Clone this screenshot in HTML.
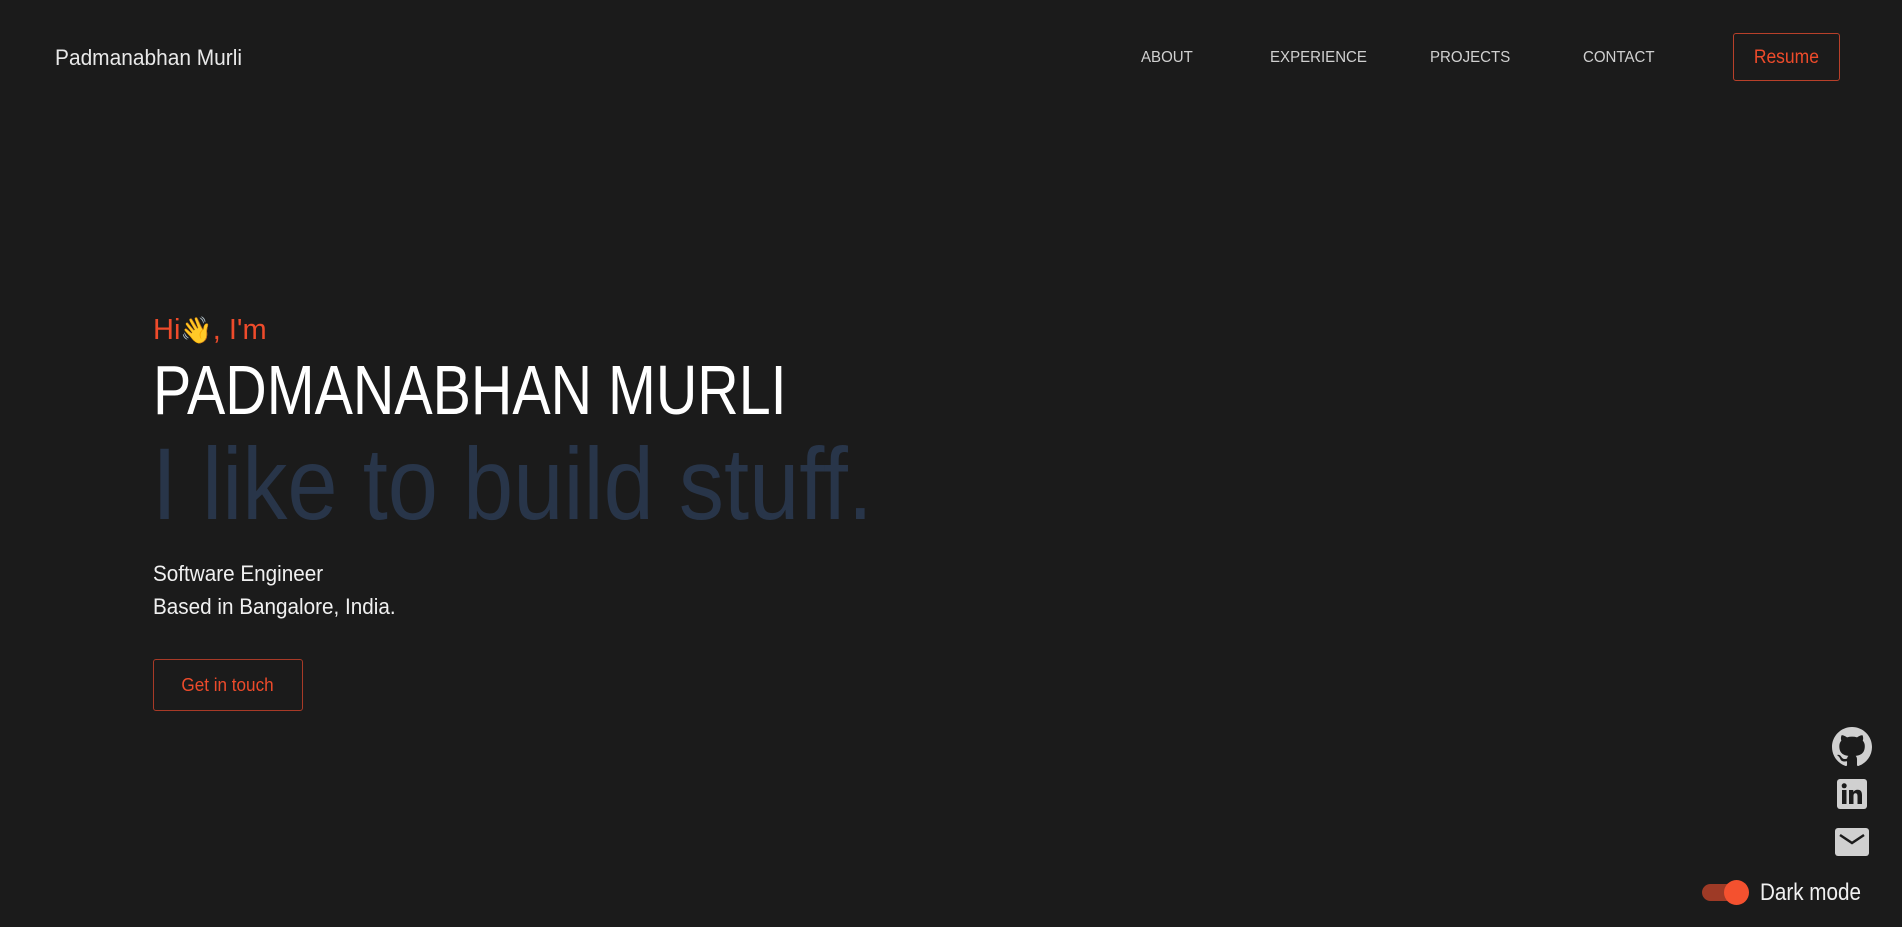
<!DOCTYPE html>
<html><head><meta charset="utf-8"><style>
html,body{margin:0;padding:0;background:#1b1b1b;width:1902px;height:927px;overflow:hidden;font-family:"Liberation Sans",sans-serif;color:#fff}
.a{position:absolute;white-space:nowrap}
.sx{display:inline-block;transform-origin:left center}
.nav{font-size:16px;color:#d0d0d0;top:49px}
.red{color:#ee4b2b}
</style></head><body>
<div class="a" style="left:55px;top:45px;font-size:22px;color:#e8e8e8"><span class="sx" style="transform:scaleX(.95)">Padmanabhan Murli</span></div>
<div class="a nav" style="left:1141px"><span class="sx" style="transform:scaleX(.94)">ABOUT</span></div>
<div class="a nav" style="left:1270px"><span class="sx" style="transform:scaleX(.94)">EXPERIENCE</span></div>
<div class="a nav" style="left:1430px"><span class="sx" style="transform:scaleX(.94)">PROJECTS</span></div>
<div class="a nav" style="left:1583px"><span class="sx" style="transform:scaleX(.94)">CONTACT</span></div>
<div class="a" style="left:1733px;top:33px;width:107px;height:48px;border:1px solid #b8402a;border-radius:3px;box-sizing:border-box;text-align:center;line-height:48px;font-size:19px;color:#ee4b2b"><span class="sx" style="transform:scaleX(.92);transform-origin:center">Resume</span></div>

<div class="a red" style="left:153px;top:314px;font-size:29px"><span class="sx" style="transform:scaleX(1.0)">Hi<span style="font-family:'Noto Color Emoji','DejaVu Sans',sans-serif;font-size:26px">👋</span>, I'm</span></div>
<div class="a" style="left:153px;top:352px;font-size:70px;line-height:76px"><span class="sx" style="transform:scaleX(.82)">PADMANABHAN MURLI</span></div>
<div class="a" style="left:152px;top:427px;font-size:102px;line-height:115px;color:#283549"><span class="sx" style="transform:scaleX(.885)">I like to build stuff.</span></div>
<div class="a" style="left:153px;top:557px;font-size:22px;line-height:33px;color:#f0f0f0"><span class="sx" style="transform:scaleX(.94)">Software Engineer<br>Based in Bangalore, India.</span></div>
<div class="a" style="left:153px;top:659px;width:150px;height:52px;border:1px solid #a83a27;border-radius:3px;box-sizing:border-box;text-align:center;line-height:50px;font-size:18px;color:#ee4b2b"><span class="sx" style="transform:scaleX(.95);transform-origin:center">Get in touch</span></div>

<svg class="a" style="left:1832px;top:727px" width="40" height="40" viewBox="0 0 16 16"><path fill="#d0d0d0" d="M8 0C3.58 0 0 3.58 0 8c0 3.540 2.290 6.530 5.470 7.590.4.07.55-.17.55-.38 0-.19-.01-.82-.01-1.49-2.01.37-2.530-.49-2.690-.94-.09-.23-.48-.94-.82-1.130-.28-.15-.68-.52-.01-.53.63-.01 1.080.58 1.230.82.72 1.210 1.870.87 2.330.66.07-.52.28-.87.51-1.070-1.780-.2-3.640-.89-3.640-3.950 0-.87.31-1.590.82-2.150-.08-.2-.36-1.020.08-2.120 0 0 .67-.21 2.200.82.64-.18 1.320-.27 2-.27.68 0 1.360.09 2 .27 1.530-1.040 2.200-.82 2.200-.82.44 1.100.16 1.920.08 2.120.51.56.82 1.270.82 2.150 0 3.070-1.870 3.750-3.650 3.950.29.25.54.73.54 1.480 0 1.070-.01 1.930-.01 2.200 0 .21.15.46.55.38A8.013 8.013 0 0016 8c0-4.420-3.580-8-8-8z"/></svg>
<svg class="a" style="left:1837px;top:779px" width="30" height="30" viewBox="0 0 30 30"><rect width="30" height="30" rx="3" fill="#d0d0d0"/><rect x="5" y="11" width="4.5" height="14" fill="#1b1b1b"/><circle cx="7.2" cy="6.8" r="2.5" fill="#1b1b1b"/><path fill="#1b1b1b" d="M12 11h4.3v2c.8-1.4 2.3-2.3 4.3-2.3 3.4 0 4.4 2.2 4.4 5.6V25h-4.5v-7.8c0-1.8-.4-3-2-3s-2 1.3-2 3V25H12z"/></svg>
<svg class="a" style="left:1835px;top:828px" width="34" height="28" viewBox="0 0 34 28"><rect width="34" height="28" rx="3" fill="#d0d0d0"/><path d="M5 7l12 8 12-8" fill="none" stroke="#1b1b1b" stroke-width="2.5"/></svg>

<div class="a" style="left:1702px;top:884px;width:42px;height:17px;border-radius:9px;background:#9e3a26"></div>
<div class="a" style="left:1724px;top:880px;width:25px;height:25px;border-radius:50%;background:#f4512f"></div>
<div class="a" style="left:1760px;top:879px;font-size:24px;color:#f0f0f0"><span class="sx" style="transform:scaleX(.86)">Dark mode</span></div>
</body></html>
